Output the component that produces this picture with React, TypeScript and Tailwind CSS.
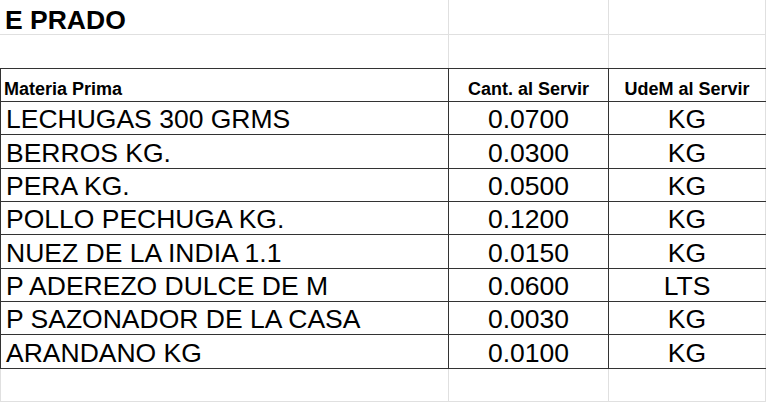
import React from "react";

const rows: { name: string; qty: string; unit: string; h: string }[] = [
  { name: "LECHUGAS 300 GRMS", qty: "0.0700", unit: "KG", h: "h-[33px]" },
  { name: "BERROS KG.", qty: "0.0300", unit: "KG", h: "h-[34px]" },
  { name: "PERA KG.", qty: "0.0500", unit: "KG", h: "h-[33px]" },
  { name: "POLLO PECHUGA KG.", qty: "0.1200", unit: "KG", h: "h-[33px]" },
  { name: "NUEZ DE LA INDIA 1.1", qty: "0.0150", unit: "KG", h: "h-[34px]" },
  { name: "P ADEREZO DULCE DE M", qty: "0.0600", unit: "LTS", h: "h-[33px]" },
  { name: "P SAZONADOR DE LA CASA", qty: "0.0030", unit: "KG", h: "h-[33px]" },
  { name: "ARANDANO KG", qty: "0.0100", unit: "KG", h: "h-[34px]" },
];

export default function App() {
  return (
    <div className="w-[766px] h-[402px] overflow-hidden bg-white text-black font-['Liberation_Sans',Arial,sans-serif]">
      {/* Row 1 - title */}
      <div className="grid grid-cols-[449px_160px_157px] h-[35px] border-b border-[#e0e0e0]">
        <div className="flex items-end pl-[5px] pb-[1px] border-r border-[#e0e0e0] overflow-visible whitespace-nowrap">
          <span className="text-[26.5px] leading-none font-bold">E PRADO</span>
        </div>
        <div className="border-r border-[#e0e0e0]" />
        <div className="border-r border-[#e0e0e0]" />
      </div>
      {/* Row 2 - empty */}
      <div className="grid grid-cols-[449px_160px_157px] h-[33px]">
        <div className="border-r border-[#e0e0e0]" />
        <div className="border-r border-[#e0e0e0]" />
        <div className="border-r border-[#e0e0e0]" />
      </div>
      {/* Header */}
      <div className="grid grid-cols-[449px_160px_157px] h-[34px] border-t border-b border-[#333]">
        <div className="flex items-end pl-[3px] pb-[3px] border-l border-r border-[#333] whitespace-nowrap">
          <span className="text-[18px] leading-none font-bold">Materia Prima</span>
        </div>
        <div className="flex items-end justify-center pb-[3px] border-r border-[#333] whitespace-nowrap">
          <span className="text-[18px] leading-none font-bold">Cant. al Servir</span>
        </div>
        <div className="flex items-end justify-center pb-[3px] border-r border-[#e0e0e0] whitespace-nowrap">
          <span className="text-[18px] leading-none font-bold">UdeM al Servir</span>
        </div>
      </div>
      {/* Data rows */}
      {rows.map((r) => (
        <div
          key={r.name}
          className={`grid grid-cols-[449px_160px_157px] ${r.h} border-b border-[#333]`}
        >
          <div className="flex items-end pl-[5px] pb-[2px] border-l border-r border-[#333] whitespace-nowrap">
            <span className="text-[26.5px] leading-none">{r.name}</span>
          </div>
          <div className="flex items-end justify-center pb-[2px] border-r border-[#333]">
            <span className="text-[26.5px] leading-none">{r.qty}</span>
          </div>
          <div className="flex items-end justify-center pb-[2px] border-r border-[#e0e0e0]">
            <span className="text-[26.5px] leading-none">{r.unit}</span>
          </div>
        </div>
      ))}
      {/* Blank row */}
      <div className="grid grid-cols-[449px_160px_157px] h-[33px] border-b border-[#e0e0e0]">
        <div className="border-l border-r border-[#e0e0e0]" />
        <div className="border-r border-[#e0e0e0]" />
        <div className="border-r border-[#e0e0e0]" />
      </div>
    </div>
  );
}
